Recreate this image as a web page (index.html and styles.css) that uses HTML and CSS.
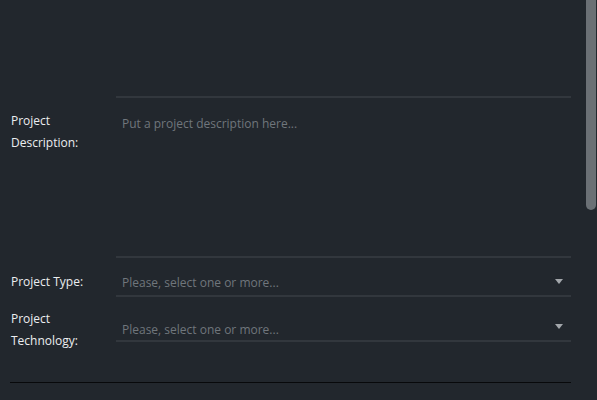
FILE: index.html
```html
<!DOCTYPE html>
<html lang="en">
<head>
<meta charset="utf-8">
<title>Project form</title>
<link rel="stylesheet" href="styles.css">
</head>
<body>
<div class="scroller">
  <form class="form">
    <div class="row row-prev">
      <div class="label"></div>
      <div class="field field-prev"></div>
    </div>
    <div class="row">
      <div class="label label-desc">Project Description:</div>
      <div class="field field-text"><span class="placeholder">Put a project description here...</span></div>
    </div>
    <div class="row">
      <div class="label label-type">Project Type:</div>
      <div class="field field-select field-type">
        <span class="placeholder">Please, select one or more...</span>
        <svg class="caret" width="8" height="5" viewBox="0 0 8 5"><path d="M0 0H8L4 5Z"/></svg>
      </div>
    </div>
    <div class="row row-tech">
      <div class="label label-tech">Project Technology:</div>
      <div class="field field-select field-tech">
        <span class="placeholder">Please, select one or more...</span>
        <svg class="caret" width="8" height="5" viewBox="0 0 8 5"><path d="M0 0H8L4 5Z"/></svg>
      </div>
    </div>
    <div class="divider"></div>
    <div class="footer"></div>
  </form>
  <div class="scroll-thumb"></div>
</div>
</body>
</html>
```

FILE: styles.css
```css
html, body {
  margin: 0;
  padding: 0;
  background: #22272d;
}

body {
  font-family: "Open Sans", "Noto Sans", sans-serif;
  font-size: 12px;
  line-height: 22px;
  color: #eceef0;
}

.scroller {
  position: relative;
  height: 400px;
  overflow: hidden;
  background: #22272d;
}

.scroll-thumb {
  position: absolute;
  top: 0;
  right: 1px;
  width: 10px;
  height: 210px;
  background: #6b7075;
  border-radius: 0 0 5px 5px;
}

.form {
  display: flex;
  flex-direction: column;
  padding: 0 26px 0 11px;
}

.row {
  display: flex;
  align-items: flex-start;
}

.label {
  width: 105px;
  flex: none;
  padding-top: 12px;
}

.label-type {
  padding-top: 13px;
}

.label-tech {
  padding-top: 11px;
}

.field {
  flex: 1;
  display: flex;
  align-items: flex-start;
  border-bottom: 2px solid #32373d;
  padding: 0 8px 0 6px;
  box-sizing: border-box;
}

.field-prev {
  height: 98px;
}

.field-text {
  height: 160px;
  padding-top: 15px;
}

.field-type {
  height: 39px;
  padding-top: 14px;
}

.field-tech {
  height: 45px;
  padding-top: 22px;
}

.placeholder {
  flex: 1;
  color: #70767c;
}

.caret {
  fill: #a3a7ab;
  flex: none;
}

.field-type .caret {
  margin-top: 7px;
}

.field-tech .caret {
  margin-top: 5px;
}

.divider {
  margin: 30px 0 0 -1px;
  height: 1px;
  background: #08090b;
}

.footer {
  height: 380px;
}
```
